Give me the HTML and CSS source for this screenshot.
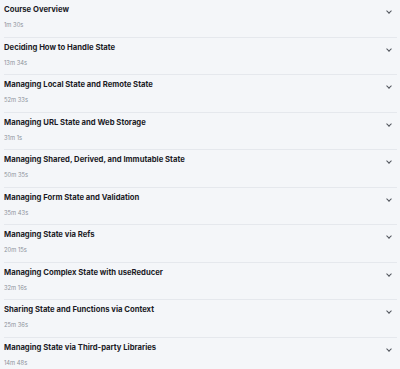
FILE: index.html
```html
<!DOCTYPE html>
<html lang="en">
<head>
  <meta charset="UTF-8" />
  <title>Course Contents</title>
  <link rel="stylesheet" href="styles.css">
</head>
<body>
  <ul class="modules">
    <li class="module"><div class="info"><h3>Course Overview</h3><p>1m 30s</p></div><span class="chev"></span></li>
    <li class="module"><div class="info"><h3>Deciding How to Handle State</h3><p>13m 34s</p></div><span class="chev"></span></li>
    <li class="module"><div class="info"><h3>Managing Local State and Remote State</h3><p>52m 33s</p></div><span class="chev"></span></li>
    <li class="module"><div class="info"><h3>Managing URL State and Web Storage</h3><p>31m 1s</p></div><span class="chev"></span></li>
    <li class="module"><div class="info"><h3>Managing Shared, Derived, and Immutable State</h3><p>50m 35s</p></div><span class="chev"></span></li>
    <li class="module"><div class="info"><h3>Managing Form State and Validation</h3><p>35m 43s</p></div><span class="chev"></span></li>
    <li class="module"><div class="info"><h3>Managing State via Refs</h3><p>20m 15s</p></div><span class="chev"></span></li>
    <li class="module"><div class="info"><h3>Managing Complex State with useReducer</h3><p>32m 16s</p></div><span class="chev"></span></li>
    <li class="module"><div class="info"><h3>Sharing State and Functions via Context</h3><p>25m 36s</p></div><span class="chev"></span></li>
    <li class="module"><div class="info"><h3>Managing State via Third-party Libraries</h3><p>14m 48s</p></div><span class="chev"></span></li>
  </ul>
</body>
</html>
```
FILE: styles.css
```css
body {
  margin: 0;
  background: #f4f6f9;
  font-family: 'Inter', sans-serif;
  color: #1b1b26;
}

.modules {
  list-style: none;
  margin: 0;
  padding: 0 3px 0 4px;
}

.module {
  height: 37.5px;
  box-sizing: border-box;
  display: flex;
  align-items: flex-start;
  justify-content: space-between;
  border-bottom: 1px solid #e5e8ed;
}

.info {
  padding-top: 5px;
}

.info h3 {
  margin: 0;
  font-size: 7.7px;
  font-weight: 700;
  line-height: 10px;
}

.info p {
  margin: 5px 0 0;
  font-size: 5.8px;
  line-height: 9px;
  color: #8d929b;
}

.chev {
  width: 3px;
  height: 3px;
  border-right: 1.5px solid #50545c;
  border-bottom: 1.5px solid #50545c;
  transform: rotate(45deg);
  margin: 9px 6px 0 0;
}
```
